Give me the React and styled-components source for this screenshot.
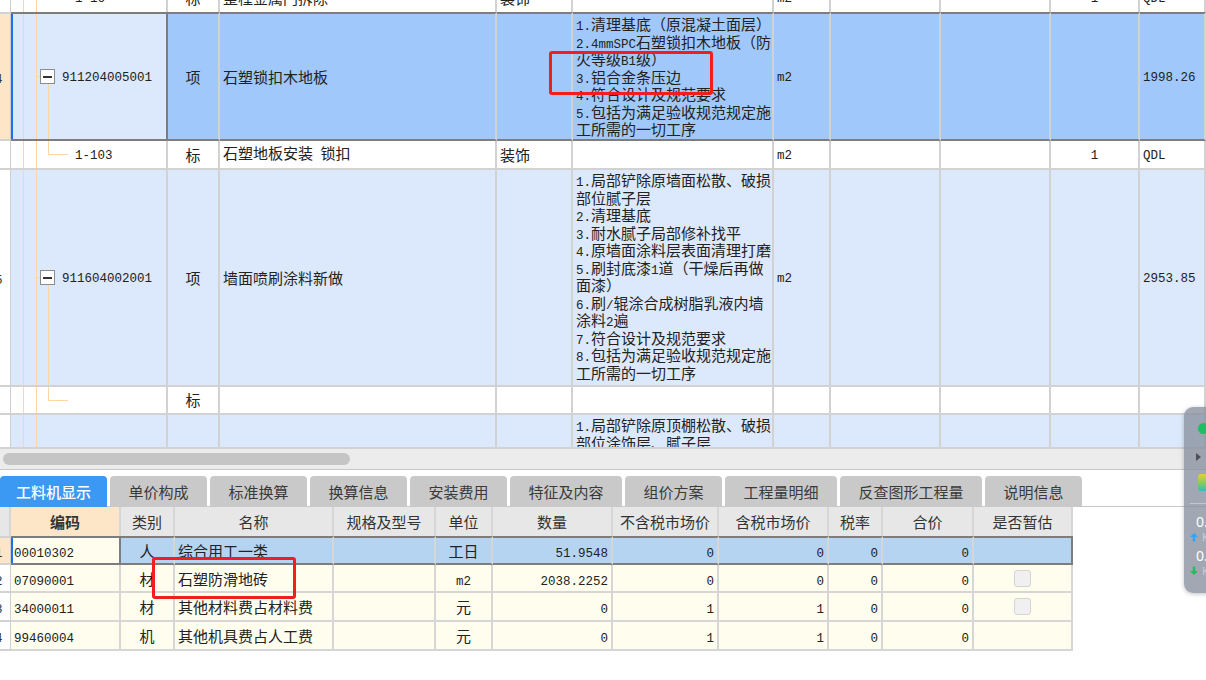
import React from "react";
import styled, { createGlobalStyle } from "styled-components";

const GlobalStyle = createGlobalStyle`
  html, body {
    margin: 0;
    padding: 0;
    background: #fff;
    overflow: hidden;
  }
  body {
    font-family: "Noto Sans CJK SC", "Noto Sans", sans-serif;
    color: #222;
  }
`;

const TOP_COLS = "11px 157px 52px 277px 76px 201px 57px 110px 110px 89px 66px";
const BOTTOM_COLS =
  "11px 110px 54px 159px 102px 57px 120px 106px 110px 54px 91px 99px";

const LIGHT_LINE = "#d2d2d2";
const DARK_LINE = "#7d7d7d";
const FOCUS_BLUE = "#1d6ff2";

const topRows = [
  {
    kind: "std",
    tree: "pass",
    h: 31,
    mt: -17,
    code: "1-16",
    type: "标",
    name: "整樘金属门拆除",
    major: "装饰",
    unit: "m2",
    qty: "1",
    last: "QDL",
  },
  {
    kind: "sel",
    tree: "item",
    h: 129,
    mt: -2,
    num: "4",
    code: "911204005001",
    type: "项",
    name: "石塑锁扣木地板",
    desc: [
      "1.清理基底（原混凝土面层）",
      "2.4mmSPC石塑锁扣木地板（防",
      "火等级B1级）",
      "3.铝合金条压边",
      "4.符合设计及规范要求",
      "5.包括为满足验收规范规定施",
      "工所需的一切工序",
    ],
    unit: "m2",
    last: "1998.26",
  },
  {
    kind: "std",
    tree: "child",
    h: 29,
    code: "1-103",
    type: "标",
    name: "石塑地板安装 锁扣",
    major: "装饰",
    unit: "m2",
    qty: "1",
    last: "QDL",
  },
  {
    kind: "item",
    tree: "item",
    h: 217,
    num: "5",
    code: "911604002001",
    type: "项",
    name: "墙面喷刷涂料新做",
    desc: [
      "1.局部铲除原墙面松散、破损",
      "部位腻子层",
      "2.清理基底",
      "3.耐水腻子局部修补找平",
      "4.原墙面涂料层表面清理打磨",
      "5.刷封底漆1道（干燥后再做",
      "面漆）",
      "6.刷/辊涂合成树脂乳液内墙",
      "涂料2遍",
      "7.符合设计及规范要求",
      "8.包括为满足验收规范规定施",
      "工所需的一切工序",
    ],
    unit: "m2",
    last: "2953.85",
  },
  { kind: "std", tree: "child", h: 28, type: "标" },
  {
    kind: "item",
    tree: "pass",
    h: 34,
    desc: ["1.局部铲除原顶棚松散、破损", "部位涂饰层、腻子层"],
  },
];

const tabs = [
  { label: "工料机显示", w: 107, active: true },
  { label: "单价构成", w: 97 },
  { label: "标准换算", w: 97 },
  { label: "换算信息", w: 97 },
  { label: "安装费用", w: 97 },
  { label: "特征及内容", w: 112 },
  { label: "组价方案", w: 97 },
  { label: "工程量明细", w: 112 },
  { label: "反查图形工程量", w: 142 },
  { label: "说明信息", w: 97 },
];

const headers = [
  "",
  "编码",
  "类别",
  "名称",
  "规格及型号",
  "单位",
  "数量",
  "不含税市场价",
  "含税市场价",
  "税率",
  "合价",
  "是否暂估",
];

const bottomRows = [
  { num: "1", code: "00010302", cat: "人", name: "综合用工一类", unit: "工日", qty: "51.9548", p1: "0", p2: "0", tax: "0", sum: "0", sel: true },
  { num: "2", code: "07090001", cat: "材", name: "石塑防滑地砖", unit: "m2", qty: "2038.2252", p1: "0", p2: "0", tax: "0", sum: "0", check: true },
  { num: "3", code: "34000011", cat: "材", name: "其他材料费占材料费", unit: "元", qty: "0", p1: "1", p2: "1", tax: "0", sum: "0", check: true },
  { num: "4", code: "99460004", cat: "机", name: "其他机具费占人工费", unit: "元", qty: "0", p1: "1", p2: "1", tax: "0", sum: "0" },
];

/* half-width runs look like SimSun: monospace at half the CJK width */
const Latin = styled.span`
  font-family: "Liberation Mono", "DejaVu Sans Mono", monospace;
  font-size: 12.5px;
  white-space: pre;
`;

function Txt({ children }) {
  if (children == null) return null;
  const parts = String(children).split(/([\x20-\x7e]+)/);
  return (
    <span>
      {parts.map((p, i) => (i % 2 ? <Latin key={i}>{p}</Latin> : p))}
    </span>
  );
}

const Page = styled.div`
  position: relative;
  width: 1206px;
  height: 680px;
  overflow: hidden;
  background: #fff;
`;

/* ---------- top grid ---------- */

const TopGrid = styled.div`
  height: 449px;
  overflow: hidden;
`;

const TRow = styled.div`
  display: grid;
  grid-template-columns: ${TOP_COLS};
  height: ${(p) => p.$h}px;
  margin-top: ${(p) => p.$mt || 0}px;
`;

const NumCell = styled.div`
  box-sizing: border-box;
  display: flex;
  align-items: center;
  overflow: hidden;
  background: ${(p) => p.$bg};
  border-right: 1px solid #cfcfcf;
  border-bottom: 2px solid ${LIGHT_LINE};
  border-top: ${(p) => (p.$sel ? `2px solid ${LIGHT_LINE}` : "none")};
  font-size: 15px;
  color: #333;
`;

const NumText = styled.span`
  margin-left: -5px;
`;

const TCell = styled.div`
  box-sizing: border-box;
  position: relative;
  display: flex;
  align-items: ${(p) => (p.$top ? "flex-start" : "center")};
  justify-content: ${(p) => p.$justify || "flex-start"};
  padding: ${(p) => p.$pad || "0 3px"};
  background: ${(p) => p.$bg};
  border-right: 2px solid ${(p) => (p.$focus ? DARK_LINE : LIGHT_LINE)};
  border-bottom: 2px solid ${(p) => (p.$sel ? DARK_LINE : LIGHT_LINE)};
  border-top: ${(p) => (p.$sel ? `2px solid ${DARK_LINE}` : "none")};
  box-shadow: ${(p) => (p.$focus ? `inset 2px 0 0 ${FOCUS_BLUE}` : "none")};
  overflow: hidden;
  white-space: nowrap;
  font-size: 15px;
  line-height: 17.5px;
  color: #222;
`;

const DescLines = styled.div`
  display: flex;
  flex-direction: column;
  padding-top: 1px;
`;

const DescLine = styled.div`
  height: 17.5px;
  line-height: 17.5px;
  & ${Latin} {
    line-height: 1;
  }
`;

const Toggle = styled.span`
  position: relative;
  flex: none;
  box-sizing: border-box;
  width: 15px;
  height: 15px;
  margin-right: 7px;
  border: 1px solid #8c8c8c;
  background: #fff;
  &::after {
    content: "";
    position: absolute;
    left: 2px;
    right: 2px;
    top: 5.5px;
    height: 2px;
    background: #333;
  }
`;

const GuideSvg = styled.svg`
  position: absolute;
  left: 0;
  top: 0;
  pointer-events: none;
  line {
    stroke: #fcd6a4;
    stroke-width: 1;
  }
`;

function TreeGuide({ h, kind }) {
  const c = Math.floor(h / 2) + 0.5;
  return (
    <GuideSvg width="60" height={h}>
      <line x1="12.5" y1="0" x2="12.5" y2={h} />
      <line x1="25.5" y1="0" x2="25.5" y2={h} />
      {kind === "item" && (
        <>
          <line x1="25.5" y1={c} x2="29" y2={c} />
          <line x1="37.5" y1={c} x2="37.5" y2={h} />
        </>
      )}
      {kind === "child" && (
        <>
          <line x1="37.5" y1="0" x2="37.5" y2={c} />
          <line x1="37.5" y1={c} x2="57" y2={c} />
        </>
      )}
    </GuideSvg>
  );
}

const topBg = (kind, col) => {
  if (col === 0) return kind === "sel" ? "#fde6c8" : "#fff";
  if (kind === "item") return "#dce8fb";
  if (kind === "sel") return col === 1 ? "#dce8fb" : "#a1c8fa";
  return "#fff";
};

function TopRow({ r }) {
  const sel = r.kind === "sel";
  const inner = r.h - (sel ? 4 : 2);
  const bg = (c) => topBg(r.kind, c);
  const isItem = r.type === "项";
  return (
    <TRow $h={r.h} $mt={r.mt}>
      <NumCell $bg={bg(0)} $sel={sel}>
        {r.num && (
          <NumText>
            <Txt>{r.num}</Txt>
          </NumText>
        )}
      </NumCell>
      <TCell
        $bg={bg(1)}
        $sel={sel}
        $focus={sel}
        $pad={isItem ? "0 0 0 29px" : "0 0 0 64px"}
      >
        <TreeGuide h={inner} kind={r.tree} />
        {isItem && r.code && <Toggle />}
        <Txt>{r.code}</Txt>
      </TCell>
      <TCell $bg={bg(2)} $sel={sel} $justify="center" $pad="0">
        {r.type}
      </TCell>
      <TCell $bg={bg(3)} $sel={sel}>
        <Txt>{r.name}</Txt>
      </TCell>
      <TCell $bg={bg(4)} $sel={sel}>
        {r.major}
      </TCell>
      <TCell $bg={bg(5)} $sel={sel} $top>
        {r.desc && (
          <DescLines>
            {r.desc.map((line, i) => (
              <DescLine key={i}>
                <Txt>{line}</Txt>
              </DescLine>
            ))}
          </DescLines>
        )}
      </TCell>
      <TCell $bg={bg(6)} $sel={sel}>
        <Txt>{r.unit}</Txt>
      </TCell>
      <TCell $bg={bg(7)} $sel={sel} />
      <TCell $bg={bg(8)} $sel={sel} />
      <TCell $bg={bg(9)} $sel={sel} $justify="center" $pad="0">
        <Txt>{r.qty}</Txt>
      </TCell>
      <TCell $bg={bg(10)} $sel={sel}>
        <Txt>{r.last}</Txt>
      </TCell>
    </TRow>
  );
}

/* ---------- scroll bar and tabs ---------- */

const HScroll = styled.div`
  display: flex;
  align-items: center;
  height: 20px;
  padding-left: 3px;
  background: #ececec;
  border-bottom: 1px solid #c9c9c9;
`;

const Thumb = styled.div`
  width: 347px;
  height: 12px;
  border-radius: 6px;
  background: #c5c5c5;
`;

const TabBar = styled.div`
  display: flex;
  gap: 3px;
  margin-top: 6px;
  border-bottom: 1px solid #c8c8c8;
`;

const Tab = styled.div`
  box-sizing: border-box;
  display: flex;
  align-items: center;
  justify-content: center;
  width: ${(p) => p.$w}px;
  height: 31px;
  margin-bottom: -1px;
  border-radius: 4px 4px 0 0;
  background: ${(p) => (p.$active ? "#3b98f3" : "#c9c9c9")};
  color: ${(p) => (p.$active ? "#fff" : "#3a3a3a")};
  font-size: 15px;
  font-weight: ${(p) => (p.$active ? 500 : 400)};
`;

/* ---------- bottom grid ---------- */

const BottomGrid = styled.div`
  width: 1073px;
`;

const BRow = styled.div`
  display: grid;
  grid-template-columns: ${BOTTOM_COLS};
  height: ${(p) => p.$h}px;
`;

const HeadCell = styled.div`
  box-sizing: border-box;
  display: flex;
  align-items: center;
  justify-content: center;
  background: ${(p) => (p.$key ? "#fde6c8" : "#e7e7e7")};
  border-right: 2px solid #d6d6d6;
  font-size: 15px;
  font-weight: ${(p) => (p.$key ? 700 : 400)};
  color: #333;
  white-space: nowrap;
  overflow: hidden;
`;

const BNum = styled.div`
  box-sizing: border-box;
  display: flex;
  align-items: center;
  overflow: hidden;
  background: ${(p) => (p.$sel ? "#fde6c8" : "#fff")};
  border-right: 1px solid #cfcfcf;
  border-bottom: 2px solid ${LIGHT_LINE};
  border-top: ${(p) => (p.$sel ? `2px solid ${LIGHT_LINE}` : "none")};
  font-size: 15px;
  color: #333;
`;

const BCell = styled.div`
  box-sizing: border-box;
  display: flex;
  align-items: center;
  justify-content: ${(p) => p.$justify || "flex-start"};
  padding: 0 3px;
  background: ${(p) => p.$bg};
  border-right: 2px solid ${(p) => (p.$edge ? DARK_LINE : "#d6d6d6")};
  border-bottom: 2px solid ${(p) => (p.$sel ? DARK_LINE : "#d6d6d6")};
  border-top: ${(p) => (p.$sel ? `2px solid ${DARK_LINE}` : "none")};
  box-shadow: ${(p) => (p.$focus ? `inset 2px 0 0 ${FOCUS_BLUE}` : "none")};
  font-size: 15px;
  color: #222;
  white-space: nowrap;
  overflow: hidden;
`;

const CheckBox = styled.span`
  box-sizing: border-box;
  width: 17px;
  height: 17px;
  border: 1px solid #d4d4d4;
  border-radius: 3px;
  background: #f0f0f0;
`;

function BottomRow({ r, h }) {
  const sel = !!r.sel;
  const bg = sel ? "#b4d4f1" : "#fffeee";
  const cell = { $sel: sel, $bg: bg };
  return (
    <BRow $h={h}>
      <BNum $sel={sel}>
        <NumText>
          <Txt>{r.num}</Txt>
        </NumText>
      </BNum>
      <BCell $sel={sel} $bg="#fffeee" $focus={sel} $edge={sel}>
        <Txt>{r.code}</Txt>
      </BCell>
      <BCell {...cell} $justify="center">
        {r.cat}
      </BCell>
      <BCell {...cell}>{r.name}</BCell>
      <BCell {...cell} />
      <BCell {...cell} $justify="center">
        <Txt>{r.unit}</Txt>
      </BCell>
      <BCell {...cell} $justify="flex-end">
        <Txt>{r.qty}</Txt>
      </BCell>
      <BCell {...cell} $justify="flex-end">
        <Txt>{r.p1}</Txt>
      </BCell>
      <BCell {...cell} $justify="flex-end">
        <Txt>{r.p2}</Txt>
      </BCell>
      <BCell {...cell} $justify="flex-end">
        <Txt>{r.tax}</Txt>
      </BCell>
      <BCell {...cell} $justify="flex-end">
        <Txt>{r.sum}</Txt>
      </BCell>
      <BCell {...cell} $justify="center" $edge={sel}>
        {r.check && <CheckBox />}
      </BCell>
    </BRow>
  );
}

/* ---------- overlays ---------- */

const Mark = styled.div`
  position: absolute;
  left: ${(p) => p.$x}px;
  top: ${(p) => p.$y}px;
  width: ${(p) => p.$w}px;
  height: ${(p) => p.$h}px;
  box-sizing: border-box;
  border: 3px solid #f21d1d;
  border-radius: 3px;
  pointer-events: none;
`;

const FloatPanel = styled.div`
  position: absolute;
  left: 1184px;
  top: 407px;
  width: 60px;
  height: 186px;
  box-sizing: border-box;
  display: flex;
  flex-direction: column;
  padding-top: 16px;
  border-radius: 9px;
  background: rgba(138, 146, 160, 0.8);
  box-shadow: 0 1px 4px rgba(0, 0, 0, 0.25);
`;

const Dot = styled.span`
  width: 11px;
  height: 11px;
  margin-left: 14px;
  border-radius: 50%;
  background: #1cc063;
`;

const Caret = styled.span`
  width: 0;
  height: 0;
  margin: 19px 0 0 12px;
  border-left: 5px solid #4d4f55;
  border-top: 4.5px solid transparent;
  border-bottom: 4.5px solid transparent;
`;

const Swatch = styled.span`
  width: 20px;
  height: 17px;
  margin: 13px 0 0 14px;
  border-radius: 3px;
  background: linear-gradient(180deg, #e5cc3c 0%, #7fce5a 55%, #38b9c4 100%);
`;

const Divider = styled.span`
  height: 1px;
  margin: 12px 0 0 6px;
  background: rgba(255, 255, 255, 0.35);
`;

const Speed = styled.span`
  margin: ${(p) => p.$mt}px 0 0 12px;
  font-family: "Noto Sans", sans-serif;
  font-size: 14px;
  line-height: 14px;
  color: #fff;
`;

const SpeedUnit = styled.span`
  display: flex;
  align-items: center;
  gap: 3px;
  margin: 2px 0 0 5px;
  font-family: "Noto Sans", sans-serif;
  font-size: 11px;
  line-height: 11px;
  color: #c7ccd4;
`;

function Arrow({ up }) {
  const color = up ? "#2aa6ff" : "#19c15a";
  return (
    <svg width="10" height="10" viewBox="0 0 10 10">
      {up ? (
        <path d="M5 1 L9 5 H6.2 V9.5 H3.8 V5 H1 Z" fill={color} />
      ) : (
        <path d="M5 9 L9 5 H6.2 V0.5 H3.8 V5 H1 Z" fill={color} />
      )}
    </svg>
  );
}

export default function App() {
  return (
    <>
      <GlobalStyle />
      <Page>
        <TopGrid>
          {topRows.map((r, i) => (
            <TopRow key={i} r={r} />
          ))}
        </TopGrid>

        <HScroll>
          <Thumb />
        </HScroll>

        <TabBar>
          {tabs.map((t) => (
            <Tab key={t.label} $w={t.w} $active={t.active}>
              {t.label}
            </Tab>
          ))}
        </TabBar>

        <BottomGrid>
          <BRow $h={29}>
            {headers.map((h, i) => (
              <HeadCell key={i} $key={i === 1}>
                {h}
              </HeadCell>
            ))}
          </BRow>
          {bottomRows.map((r, i) => (
            <BottomRow key={r.code} r={r} h={i === 1 ? 28 : 29} />
          ))}
        </BottomGrid>

        <Mark $x={549} $y={51} $w={164} $h={44} />
        <Mark $x={152} $y={557} $w={144} $h={42} />

        <FloatPanel>
          <Dot />
          <Caret />
          <Swatch />
          <Divider />
          <Speed $mt={11}>0.</Speed>
          <SpeedUnit>
            <Arrow up />K
          </SpeedUnit>
          <Speed $mt={7}>0.</Speed>
          <SpeedUnit>
            <Arrow />K
          </SpeedUnit>
        </FloatPanel>
      </Page>
    </>
  );
}
